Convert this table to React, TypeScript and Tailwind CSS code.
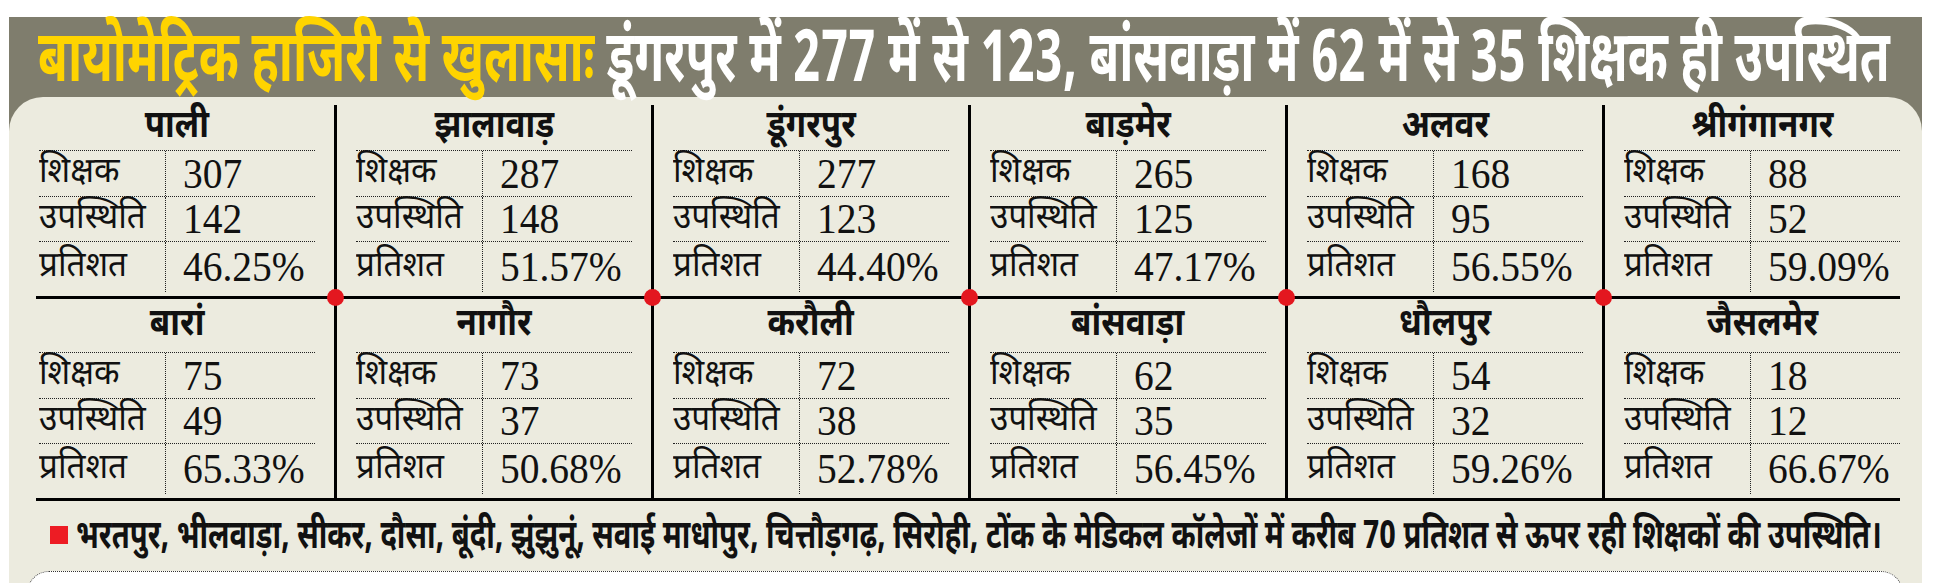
import { useLayoutEffect, useRef, useState } from "react";
import type { ReactNode } from "react";

const DEV = { fontFamily: '"Noto Sans Devanagari","Lohit Devanagari","Noto Sans",sans-serif' };

function Fit({ width, children, className }: { width: number; children: ReactNode; className?: string }) {
  const ref = useRef<HTMLSpanElement>(null);
  const [s, setS] = useState(1);
  useLayoutEffect(() => {
    const measure = () => {
      const el = ref.current;
      if (!el) return;
      const w = el.offsetWidth;
      if (w > 0) setS(width / w);
    };
    measure();
    if (document.fonts) document.fonts.ready.then(measure);
  }, [width]);
  return (
    <span
      ref={ref}
      className={"inline-block whitespace-nowrap origin-left " + (className ?? "")}
      style={{ transform: `scaleX(${s})` }}
    >
      {children}
    </span>
  );
}

type City = { name: string; t: string; u: string; p: string };

const top: City[] = [
  { name: "पाली", t: "307", u: "142", p: "46.25%" },
  { name: "झालावाड़", t: "287", u: "148", p: "51.57%" },
  { name: "डूंगरपुर", t: "277", u: "123", p: "44.40%" },
  { name: "बाड़मेर", t: "265", u: "125", p: "47.17%" },
  { name: "अलवर", t: "168", u: "95", p: "56.55%" },
  { name: "श्रीगंगानगर", t: "88", u: "52", p: "59.09%" },
];

const bottom: City[] = [
  { name: "बारां", t: "75", u: "49", p: "65.33%" },
  { name: "नागौर", t: "73", u: "37", p: "50.68%" },
  { name: "करौली", t: "72", u: "38", p: "52.78%" },
  { name: "बांसवाड़ा", t: "62", u: "35", p: "56.45%" },
  { name: "धौलपुर", t: "54", u: "32", p: "59.26%" },
  { name: "जैसलमेर", t: "18", u: "12", p: "66.67%" },
];

function Row({ label, value, h, last }: { label: string; value: string; h: string; last?: boolean }) {
  return (
    <div className={"flex " + h + (last ? " pb-[4px]" : " border-b border-dotted border-[#222]")}>
      <div className="w-[126px] flex items-center text-[35px] text-[#111] leading-none whitespace-nowrap" style={DEV}>
        <span className="inline-block origin-left scale-x-[0.95]">{label}</span>
      </div>
      <div
        className="flex-1 flex items-center pl-[17px] border-l border-dotted border-[#222] text-[42px] leading-none text-[#111]"
        style={{ fontFamily: '"Liberation Serif","Times New Roman",serif' }}
      >
        <span className="inline-block origin-left scale-x-[0.94]">{value}</span>
      </div>
    </div>
  );
}

function Half({ cities, headH, dots }: { cities: City[]; headH: string; dots?: boolean }) {
  return (
    <div className="grid grid-cols-6">
      {cities.map((c, i) => (
        <div
          key={c.name}
          className={"relative px-[19px] " + (i > 0 ? "border-l-[3px] border-black" : "border-l-[3px] border-transparent")}
        >
          {dots && i > 0 && (
            <div className="absolute -left-[10px] -top-[10px] w-[17px] h-[17px] rounded-full bg-[#e3171f]" />
          )}
          <div
            className={"flex items-center justify-center border-b border-dotted border-[#222] text-[39px] font-bold text-[#111] leading-[40px] whitespace-nowrap " + headH}
            style={DEV}
          >
            <span className="inline-block scale-x-[0.85]">{c.name}</span>
          </div>
          <Row label="शिक्षक" value={c.t} h="h-[46px]" />
          <Row label="उपस्थिति" value={c.u} h="h-[45px]" />
          <Row label="प्रतिशत" value={c.p} h="h-[54px]" last />
        </div>
      ))}
    </div>
  );
}

export default function App() {
  return (
    <div className="w-[1938px] h-[583px] bg-white overflow-hidden">
      <div className="ml-[9px] mt-[17px] w-[1913px] bg-[#7f7d6d]">
        <div className="h-[80px] flex items-center pl-[29px] pt-[2px]">
          <Fit width={1852} className="text-[72px] font-bold leading-[72px]">
            <span style={DEV} className="text-[#ffd400]">बायोमेट्रिक हाजिरी से खुलासाः </span>
            <span style={DEV} className="text-white">डूंगरपुर में 277 में से 123, बांसवाड़ा में 62 में से 35 शिक्षक ही उपस्थित</span>
          </Fit>
        </div>
        <div className="bg-[#ecebdf] rounded-t-[34px] h-[486px] pt-[8px]">
          <div className="ml-[8px] w-[1902px]">
            <Half cities={top} headH="h-[46px]" />
            <div className="mx-[19px] h-[3px] bg-black" />
            <Half cities={bottom} headH="h-[54px]" dots />
            <div className="mx-[19px] h-[3px] bg-black" />
          </div>
          <div className="flex items-center h-[70px] pl-[41px] pb-[2px]">
            <div className="w-[18px] h-[18px] bg-[#ed1c24] shrink-0" />
            <div className="ml-[8px]">
              <Fit width={1806} className="text-[40px] font-bold leading-none text-[#111]">
                <span style={DEV}>
                  भरतपुर, भीलवाड़ा, सीकर, दौसा, बूंदी, झुंझुनूं, सवाई माधोपुर, चित्तौड़गढ़, सिरोही, टोंक के मेडिकल कॉलेजों में करीब 70 प्रतिशत से ऊपर रही शिक्षकों की उपस्थिति।
                </span>
              </Fit>
            </div>
          </div>
          <div className="ml-[18px] w-[1876px] h-[40px] bg-white rounded-t-[22px] border-t border-x border-dotted border-[#333]" />
        </div>
      </div>
    </div>
  );
}
